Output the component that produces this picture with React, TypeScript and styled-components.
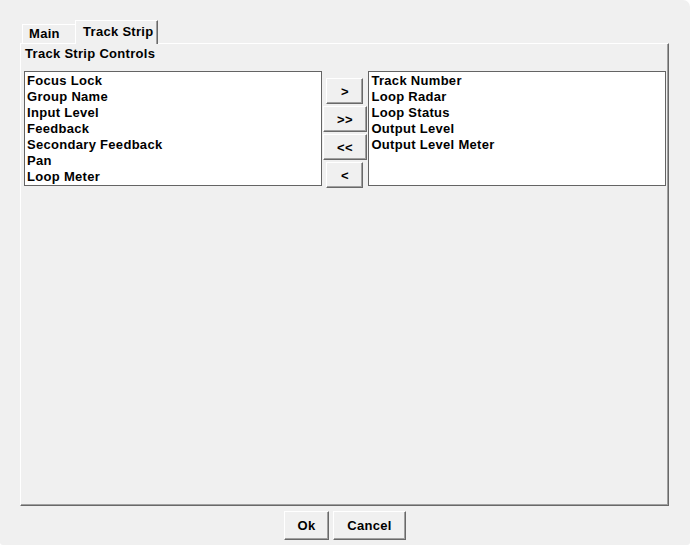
import React from "react";
import styled, { createGlobalStyle } from "styled-components";

const Global = createGlobalStyle`
  html, body { margin: 0; padding: 0; background: #ffffff; }
  body { font-family: "Liberation Sans", Arial, sans-serif; }
  * { box-sizing: border-box; }
`;

const Window = styled.div`
  width: 690px;
  height: 545px;
  background: #f0f0f0;
  border-radius: 0 7px 3px 3px;
  padding: 20px 21px 0 20px;
  display: flex;
  flex-direction: column;
  font-family: "Liberation Sans", Arial, sans-serif;
  font-weight: bold;
  font-size: 13px;
  letter-spacing: 0.3px;
  color: #000;
`;

const TabStrip = styled.div`
  display: flex;
  align-items: flex-end;
  height: 23px;
  padding-left: 2px;
  position: relative;
  z-index: 1;
`;

const Tab = styled.div<{ $active?: boolean }>`
  height: ${(p) => (p.$active ? 24 : 19)}px;
  margin-bottom: ${(p) => (p.$active ? -1 : 0)}px;
  width: ${(p) => (p.$active ? 83 : 53)}px;
  padding: ${(p) => (p.$active ? "3px 0 0 7px" : "1px 0 0 6px")};
  background: #f0f0f0;
  border-top: 1px solid #ffffff;
  border-left: 1px solid #ffffff;
  border-right: ${(p) => (p.$active ? "1px solid #696969" : "none")};
  box-shadow: ${(p) => (p.$active ? "inset -1px 0 0 #a0a0a0" : "none")};
  line-height: 15px;
  white-space: nowrap;
`;

const Panel = styled.div`
  flex: 0 0 463px;
  border-top: 1px solid #ffffff;
  border-left: 1px solid #ffffff;
  border-right: 1px solid #696969;
  border-bottom: 1px solid #696969;
  box-shadow: inset -1px -1px 0 #a0a0a0;
  padding: 2px 2px 0 3px;
  display: flex;
  flex-direction: column;
`;

const GroupLabel = styled.div`
  height: 25px;
  line-height: 15px;
  padding-left: 1px;
`;

const Row = styled.div`
  display: flex;
  align-items: flex-start;
`;

const ListBox = styled.div`
  width: 298px;
  height: 115px;
  background: #ffffff;
  border: 1px solid #646464;
  padding: 1px 0 0 2px;
  display: flex;
  flex-direction: column;
`;

const Item = styled.div`
  height: 16px;
  line-height: 16px;
  white-space: nowrap;
`;

const MoveColumn = styled.div`
  width: 47px;
  padding-top: 7px;
  display: flex;
  flex-direction: column;
  align-items: center;
  gap: 2px;
`;

const Button = styled.button<{ $w: number; $h: number }>`
  width: ${(p) => p.$w}px;
  height: ${(p) => p.$h}px;
  padding: 0;
  margin: 0;
  background: #f0f0f0;
  border-top: 1px solid #ffffff;
  border-left: 1px solid #ffffff;
  border-right: 1px solid #696969;
  border-bottom: 1px solid #696969;
  box-shadow: inset -1px -1px 0 #a0a0a0;
  font-family: "Liberation Sans", Arial, sans-serif;
  font-weight: bold;
  font-size: 13px;
  letter-spacing: 0.3px;
  color: #000;
  display: flex;
  align-items: center;
  justify-content: center;
`;

const Footer = styled.div`
  display: flex;
  justify-content: center;
  gap: 4px;
  padding-top: 5px;
  margin-left: -20px;
  margin-right: -21px;
`;

const leftItems = [
  "Focus Lock",
  "Group Name",
  "Input Level",
  "Feedback",
  "Secondary Feedback",
  "Pan",
  "Loop Meter",
];

const rightItems = [
  "Track Number",
  "Loop Radar",
  "Loop Status",
  "Output Level",
  "Output Level Meter",
];

export default function App() {
  return (
    <>
      <Global />
      <Window>
        <TabStrip>
          <Tab>Main</Tab>
          <Tab $active>Track Strip</Tab>
        </TabStrip>
        <Panel>
          <GroupLabel>Track Strip Controls</GroupLabel>
          <Row>
            <ListBox>
              {leftItems.map((t) => (
                <Item key={t}>{t}</Item>
              ))}
            </ListBox>
            <MoveColumn>
              <Button $w={37} $h={26}>&gt;</Button>
              <Button $w={44} $h={26}>&gt;&gt;</Button>
              <Button $w={44} $h={26}>&lt;&lt;</Button>
              <Button $w={37} $h={26}>&lt;</Button>
            </MoveColumn>
            <ListBox>
              {rightItems.map((t) => (
                <Item key={t}>{t}</Item>
              ))}
            </ListBox>
          </Row>
        </Panel>
        <Footer>
          <Button $w={45} $h={29}>Ok</Button>
          <Button $w={73} $h={29}>Cancel</Button>
        </Footer>
      </Window>
    </>
  );
}
